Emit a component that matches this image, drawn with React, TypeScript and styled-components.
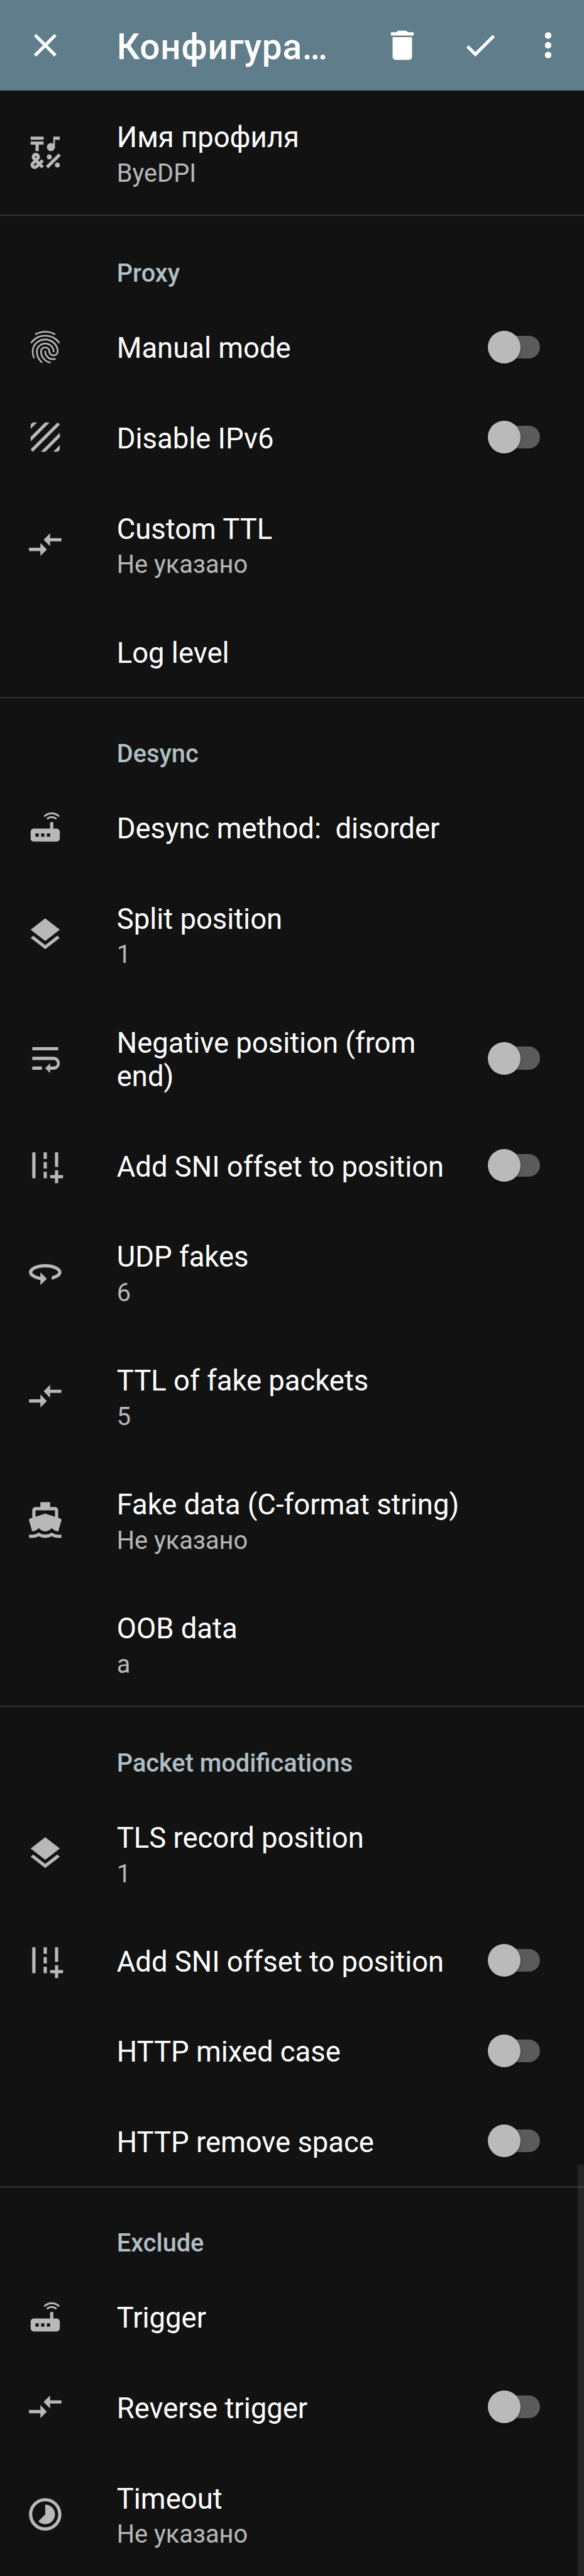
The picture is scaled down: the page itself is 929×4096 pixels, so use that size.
import React from 'react';
import styled, { createGlobalStyle } from 'styled-components';
import type { IconType } from 'react-icons';
import {
  Md360,
  MdAddRoad,
  MdCheck,
  MdClose,
  MdCompareArrows,
  MdDelete,
  MdDirectionsBoat,
  MdEmojiSymbols,
  MdFingerprint,
  MdLayers,
  MdMoreVert,
  MdRouter,
  MdTexture,
  MdTimelapse,
  MdWrapText,
} from 'react-icons/md';

// Device pixels of a 3x phone screen, scaled to the page width.
const u = (n: number) => `${+(n * 0.86).toFixed(2)}px`;

const GlobalStyle = createGlobalStyle`
  html, body { margin: 0; background: #121212; }
  body { overflow: hidden; }
`;

const Screen = styled.div`
  position: relative;
  width: 929px;
  height: 4096px;
  overflow: hidden;
  background: #121212;
  color: #fff;
  font-family: Roboto, 'Noto Sans', sans-serif;
`;

const Toolbar = styled.header`
  display: flex;
  align-items: center;
  box-sizing: border-box;
  height: ${u(168)};
  padding: 0 ${u(30)} 0 ${u(48)};
  background: #607d8b;
`;

const ToolbarTitle = styled.h1`
  flex: 1;
  margin: ${u(6.5)} 0 0 ${u(96)};
  font-size: ${u(66)};
  line-height: ${u(78)};
  font-weight: 500;
  letter-spacing: 0.75px;
  white-space: nowrap;
`;

const Action = styled.button<{ $gap?: number }>`
  display: flex;
  margin: 0 0 0 ${(p) => u(p.$gap ?? 0)};
  padding: 0;
  border: 0;
  background: none;
  color: #fff;

  svg {
    width: ${u(72)};
    height: ${u(72)};
  }
`;

const Group = styled.section<{ $first?: boolean }>`
  box-shadow: ${(p) => (p.$first ? 'none' : `inset 0 ${u(3)} 0 #2f2f2f`)};
`;

const GroupTitle = styled.h2<{ $tall?: boolean }>`
  box-sizing: border-box;
  height: ${(p) => u(p.$tall ? 161 : 158)};
  margin: 0;
  padding: ${(p) => u(p.$tall ? 82.4 : 79.4)} 0 0 ${u(216)};
  color: #b0bec5;
  font-size: ${u(46.2)};
  line-height: ${u(54)};
  font-weight: 500;
`;

const Row = styled.div<{ $lines: number }>`
  display: flex;
  align-items: center;
  box-sizing: border-box;
  height: ${(p) => u(p.$lines > 1 ? 229 : 167)};
  padding: 0 ${u(48)};
`;

const IconSlot = styled.div`
  display: flex;
  flex: none;
  width: ${u(168)};
  color: #b8b8b8;

  svg {
    width: ${u(72)};
    height: ${u(72)};
  }
`;

const Labels = styled.div`
  flex: 1;
  align-self: flex-start;
  padding-top: ${u(55.4)};
`;

const Label = styled.div`
  font-size: ${u(52.8)};
  line-height: ${u(62)};
  white-space: pre-wrap;
`;

const Summary = styled.div`
  margin-top: ${u(8.6)};
  color: #b8b8b8;
  font-size: ${u(46.2)};
  line-height: ${u(54)};
`;

const Track = styled.div`
  display: flex;
  align-items: center;
  flex: none;
  width: ${u(84)};
  height: ${u(42)};
  margin: 0 ${u(34)} 0 ${u(48)};
  border-radius: ${u(21)};
  background: #5b5b5b;
`;

const Thumb = styled.div`
  flex: none;
  width: ${u(60.5)};
  height: ${u(60.5)};
  margin-left: ${u(-12)};
  border-radius: 50%;
  background: #bababa;
  box-shadow: 0 ${u(2)} ${u(5)} rgba(0, 0, 0, 0.35);
`;

const ScrollThumb = styled.div`
  position: absolute;
  right: 0;
  bottom: 0;
  width: ${u(12)};
  height: ${u(760)};
  background: rgba(255, 255, 255, 0.08);
`;

type Item = { icon?: IconType; label: string; summary?: string; toggle?: boolean; wraps?: boolean };
type Section = { title?: string; items: Item[] };

const sections: Section[] = [
  { items: [{ icon: MdEmojiSymbols, label: 'Имя профиля', summary: 'ByeDPI' }] },
  {
    title: 'Proxy',
    items: [
      { icon: MdFingerprint, label: 'Manual mode', toggle: true },
      { icon: MdTexture, label: 'Disable IPv6', toggle: true },
      { icon: MdCompareArrows, label: 'Custom TTL', summary: 'Не указано' },
      { label: 'Log level' },
    ],
  },
  {
    title: 'Desync',
    items: [
      { icon: MdRouter, label: 'Desync method:  disorder' },
      { icon: MdLayers, label: 'Split position', summary: '1' },
      { icon: MdWrapText, label: 'Negative position (from end)', toggle: true, wraps: true },
      { icon: MdAddRoad, label: 'Add SNI offset to position', toggle: true },
      { icon: Md360, label: 'UDP fakes', summary: '6' },
      { icon: MdCompareArrows, label: 'TTL of fake packets', summary: '5' },
      { icon: MdDirectionsBoat, label: 'Fake data (C-format string)', summary: 'Не указано' },
      { label: 'OOB data', summary: 'a' },
    ],
  },
  {
    title: 'Packet modifications',
    items: [
      { icon: MdLayers, label: 'TLS record position', summary: '1' },
      { icon: MdAddRoad, label: 'Add SNI offset to position', toggle: true },
      { label: 'HTTP mixed case', toggle: true },
      { label: 'HTTP remove space', toggle: true },
    ],
  },
  {
    title: 'Exclude',
    items: [
      { icon: MdRouter, label: 'Trigger' },
      { icon: MdCompareArrows, label: 'Reverse trigger', toggle: true },
      { icon: MdTimelapse, label: 'Timeout', summary: 'Не указано' },
    ],
  },
];

function Preference({ icon: Icon, label, summary, toggle, wraps }: Item) {
  return (
    <Row $lines={summary || wraps ? 2 : 1}>
      <IconSlot>{Icon && <Icon />}</IconSlot>
      <Labels>
        <Label>{label}</Label>
        {summary && <Summary>{summary}</Summary>}
      </Labels>
      {toggle && (
        <Track role="switch" aria-checked={false}>
          <Thumb />
        </Track>
      )}
    </Row>
  );
}

export default function App() {
  return (
    <Screen>
      <GlobalStyle />
      <Toolbar>
        <Action aria-label="Close"><MdClose /></Action>
        <ToolbarTitle>Конфигура…</ToolbarTitle>
        <Action aria-label="Delete"><MdDelete /></Action>
        <Action aria-label="Apply" $gap={72}><MdCheck /></Action>
        <Action aria-label="More" $gap={54}><MdMoreVert /></Action>
      </Toolbar>
      {sections.map((section, i) => (
        <Group key={i} $first={i === 0}>
          {section.title && <GroupTitle $tall={i === 1}>{section.title}</GroupTitle>}
          {section.items.map((item) => (
            <Preference key={item.label} {...item} />
          ))}
        </Group>
      ))}
      <ScrollThumb />
    </Screen>
  );
}
